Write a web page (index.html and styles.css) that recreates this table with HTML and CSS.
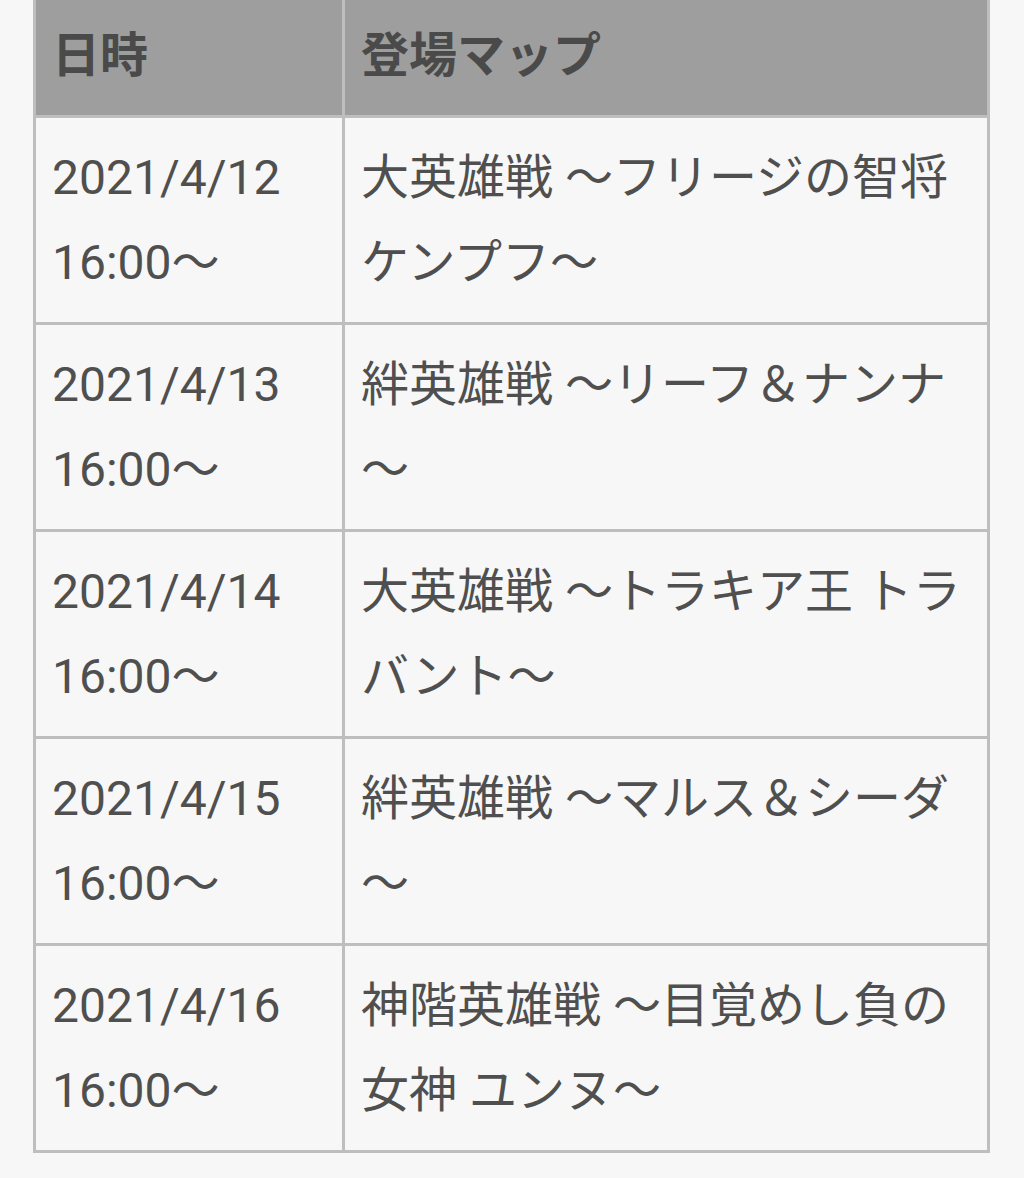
FILE: index.html
```html
<!DOCTYPE html>
<html lang="ja">
<head>
<meta charset="utf-8">
<link rel="stylesheet" href="styles.css">
</head>
<body>
<table class="schedule">
  <thead>
    <tr><th class="col-date">日時</th><th class="col-map">登場マップ</th></tr>
  </thead>
  <tbody>
    <tr><td>2021/4/12<br>16:00～</td><td>大英雄戦 ～フリージの智将ケンプフ～</td></tr>
    <tr><td>2021/4/13<br>16:00～</td><td>絆英雄戦 ～リーフ＆ナンナ～</td></tr>
    <tr><td>2021/4/14<br>16:00～</td><td>大英雄戦 ～トラキア王 トラバント～</td></tr>
    <tr><td>2021/4/15<br>16:00～</td><td>絆英雄戦 ～マルス＆シーダ～</td></tr>
    <tr><td>2021/4/16<br>16:00～</td><td>神階英雄戦 ～目覚めし負の女神 ユンヌ～</td></tr>
  </tbody>
</table>
</body>
</html>
```
FILE: styles.css
```css
html, body {
  margin: 0;
  padding: 0;
  background: #f6f7f6;
}
body {
  font-family: Roboto, "Noto Sans CJK JP", sans-serif;
  color: #4f4f4f;
}
.schedule {
  border-collapse: collapse;
  margin: -7px 0 0 33px;
  width: 957px;
  font-size: 48px;
  line-height: 85px;
}
.schedule th,
.schedule td {
  border: 3px solid #bebebe;
  padding: 17px 17px 17px 16px;
  text-align: left;
  vertical-align: top;
}
.schedule th {
  background: #9e9e9e;
  font-weight: 700;
  color: #4a4a4a;
}
.schedule td {
  background: #f6f7f6;
}
.col-date {
  width: 273px;
}
```
